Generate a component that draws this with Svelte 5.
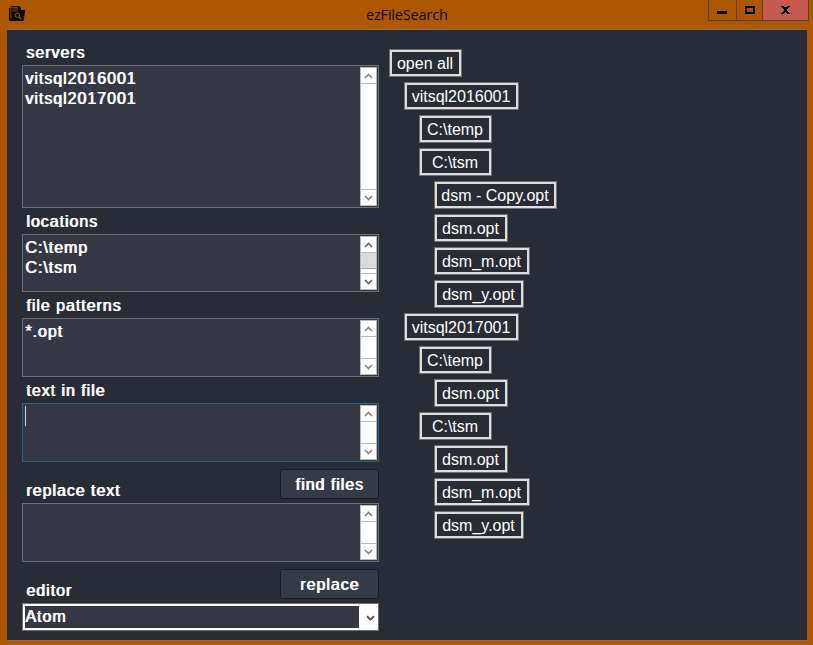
<script>
  const fields = [
    { label: 'servers', lines: ['vitsql2016001', 'vitsql2017001'], height: 143 },
    { label: 'locations', lines: ['C:\\temp', 'C:\\tsm'], height: 58, active: true },
    { label: 'file patterns', lines: ['*.opt'], height: 59 },
    { label: 'text in file', lines: [], height: 59, focus: true },
    { label: 'replace text', lines: [], height: 59, button: 'find files' }
  ];
  const tree = [
    ['open all', 0, 73],
    ['vitsql2016001', 1, 115],
    ['C:\\temp', 2, 73],
    ['C:\\tsm', 2, 73],
    ['dsm - Copy.opt', 3, 123],
    ['dsm.opt', 3, 74],
    ['dsm_m.opt', 3, 96],
    ['dsm_y.opt', 3, 90],
    ['vitsql2017001', 1, 115],
    ['C:\\temp', 2, 73],
    ['dsm.opt', 3, 74],
    ['C:\\tsm', 2, 73],
    ['dsm.opt', 3, 74],
    ['dsm_m.opt', 3, 96],
    ['dsm_y.opt', 3, 90]
  ];
</script>

<div class="window">
  <header>
    <svg class="logo" width="17" height="17" viewBox="0 0 17 17">
      <path d="M0 2h1.5V0H10l2 2v2h4.3L14.5 15H1L0 14z" fill="#080705" />
      <path d="M1.8 13V1.3h7.4M3.4 3h6M3.4 5h5.2" fill="none" stroke="#ad5700" stroke-width=".8" />
      <path d="M12.6 1.5v2h4" fill="none" stroke="#ad5700" stroke-width=".8" />
      <circle cx="8.3" cy="9.2" r="2.2" fill="none" stroke="#ad5700" />
      <path d="M10 11l2.2 2.2" stroke="#ad5700" stroke-width="1.2" />
    </svg>
    <span class="title">ezFileSearch</span>
    <div class="controls">
      <span class="min"><i></i></span>
      <span class="max"><i></i></span>
      <span class="close">
        <svg width="9" height="8" viewBox="0 0 9 8" shape-rendering="crispEdges">
          <path d="M0 0h3v1h3V0h3v1H8v1H7v1H6v2h1v1h1v1h1v1H6V7H5V6H4v1H3v1H0V7h1V6h1V5h1V3H2V2H1V1H0z" fill="#000" />
        </svg>
      </span>
    </div>
  </header>

  <main>
    <div class="form">
      {#each fields as f}
        <div class="head" class:tall={f.button}>
          <span class="label">{f.label}</span>
          {#if f.button}<button>{f.button}</button>{/if}
        </div>
        <div class="box" class:focus={f.focus} style:height="{f.height}px">
          <div class="text">
            {#each f.lines as line}<div>{line}</div>{/each}
            {#if f.focus}<div class="caret"></div>{/if}
          </div>
          <div class="scroll" class:active={f.active}>
            <span class="arrow"><svg width="9" height="6" viewBox="0 0 9 6"><path d="M1 5l3.5-3.5L8 5" /></svg></span>
            <span class="track">{#if f.active}<i></i>{/if}</span>
            <span class="arrow"><svg width="9" height="6" viewBox="0 0 9 6"><path d="M1 1l3.5 3.5L8 1" /></svg></span>
          </div>
        </div>
      {/each}
      <div class="head tall">
        <span class="label">editor</span>
        <button>replace</button>
      </div>
      <div class="select">
        <span class="value">Atom</span>
        <svg width="9" height="7" viewBox="0 0 9 7"><path d="M1 1.3l3.5 3.4L8 1.3" /></svg>
      </div>
    </div>

    <div class="tree">
      {#each tree as [name, depth, width]}
        <div class="node" style:width="{width}px" style:margin-left="{depth * 15}px">{name}</div>
      {/each}
    </div>
  </main>
</div>

<style>
  .window {
    box-sizing: border-box;
    width: 813px;
    height: 645px;
    padding: 0 6px 4px 7px;
    background: #ad5700;
    font-family: 'Liberation Sans', Arial, sans-serif;
    color: #fff;
  }
  header {
    display: flex;
    justify-content: space-between;
    height: 29px;
  }
  .logo {
    margin: 6px 0 0 2px;
  }
  .title {
    margin: 5px 0 0 340px;
    width: 84px;
    font: 14.5px/20px 'Open Sans', sans-serif;
    letter-spacing: -0.18px;
    color: #100800;
    white-space: nowrap;
  }
  .controls {
    display: flex;
    margin: 0 -2px 0 auto;
    height: 21px;
    width: 101px;
  }
  .controls span {
    box-sizing: border-box;
    display: flex;
    justify-content: center;
    border: solid #56413b;
    border-width: 0 0 1px 1px;
  }
  .controls .min { width: 28px; padding-right: 2px; }
  .max { width: 26px; }
  .controls .close {
    width: 47px;
    border-right-width: 1px;
    background: #c45a50;
    padding-top: 6px;
  }
  .min i { width: 10px; height: 3px; margin-top: 11px; background: #000; }
  .max i { box-sizing: border-box; width: 10px; height: 8px; margin-top: 6px; border: 2px solid #000; }
  main {
    box-sizing: border-box;
    display: flex;
    gap: 10px;
    height: 612px;
    padding: 9px 15px 0;
    background: #282c34;
    border: solid #8c6d51;
    border-width: 1px 0;
  }
  .form {
    width: 357px;
    flex: none;
  }
  .head {
    box-sizing: border-box;
    display: flex;
    justify-content: space-between;
    align-items: flex-end;
    height: 26px;
    padding-bottom: 4px;
  }
  .head.tall {
    height: 41px;
  }
  .label,
  .text,
  .select,
  button {
    font: 16px/20px 'Liberation Sans', Arial, sans-serif;
    letter-spacing: 0.96px;
    text-shadow: 0.9px 0 0 #fff;
    color: #fff;
  }
  .label {
    margin: 0 0 -2px 4px;
  }
  button {
    width: 99px;
    height: 30px;
    padding: 1px 0 0;
    border: 1px solid #181a1f;
    border-radius: 3px;
    background: #353b45;
  }
  .box {
    box-sizing: border-box;
    display: flex;
    justify-content: space-between;
    border: 1px solid #707070;
    padding: 1px;
    background: #353842;
  }
  .box.focus {
    border-color: #286090;
  }
  .text {
    padding: 2px 0 0 1px;
  }
  .caret {
    width: 1px;
    height: 20px;
    margin-top: -1px;
    background: #d5d0c8;
  }
  .scroll {
    display: flex;
    flex-direction: column;
    box-sizing: border-box;
    width: 17px;
    border: 1px solid #b8b8b8;
    background: #fff;
  }
  .arrow {
    display: flex;
    align-items: center;
    justify-content: center;
    height: 15px;
    flex: none;
  }
  .arrow path {
    fill: none;
    stroke: #858585;
    stroke-width: 1.7;
  }
  .active .arrow path { stroke: #606060; }
  .track {
    flex: 1;
    border: solid #b8b8b8;
    border-width: 1px 0;
  }
  .track i {
    display: block;
    height: 15px;
    background: #dadada;
    border-bottom: 1px solid #a8a8a8;
  }
  .select {
    box-sizing: border-box;
    display: flex;
    align-items: center;
    height: 28px;
    border: 1px solid #707070;
    background: #fff;
    padding: 2px;
  }
  .select .value {
    box-sizing: border-box;
    width: 334px;
    height: 22px;
    padding-top: 1px;
    background: #353842;
  }
  .select svg { margin: 2px 0 0 7px; }
  .select path { fill: none; stroke: #555; stroke-width: 2; }
  .tree {
    display: flex;
    flex-direction: column;
    gap: 5px;
    padding-top: 10px;
  }
  .node {
    box-sizing: border-box;
    height: 28px;
    padding-right: 1px;
    border: 1px solid #707070;
    box-shadow: inset 0 0 0 2px #ddd;
    text-align: center;
    font-size: 16px;
    line-height: 27px;
    white-space: pre;
  }
</style>
